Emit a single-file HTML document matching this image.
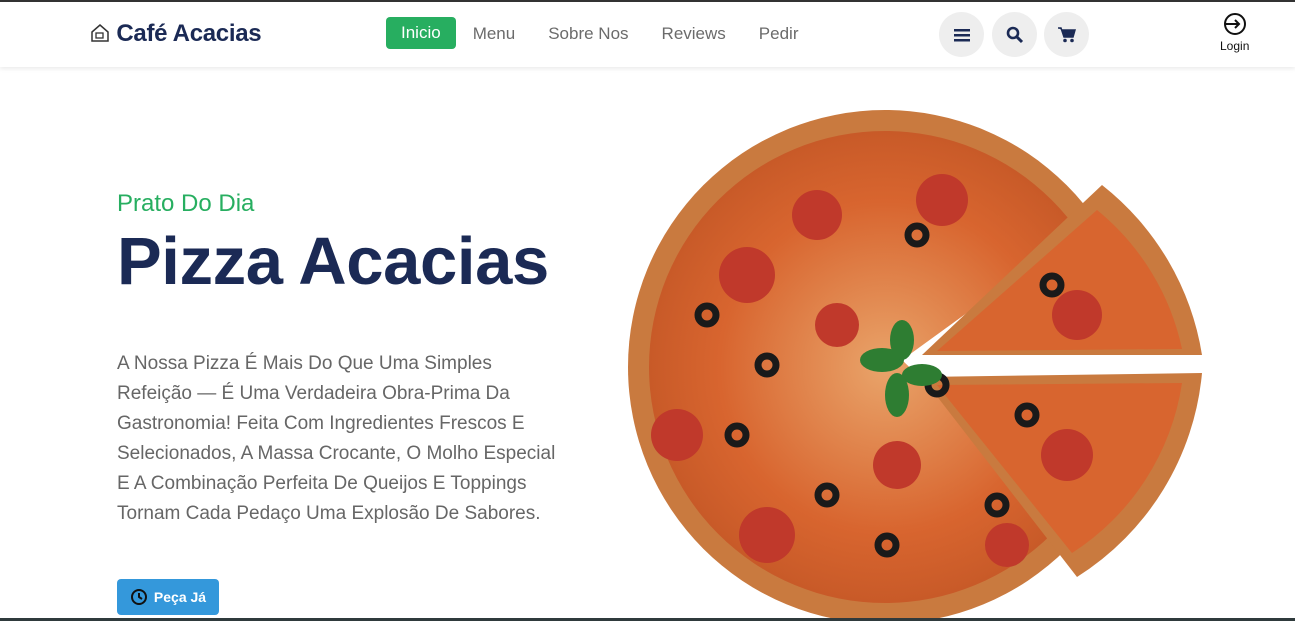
<!DOCTYPE html>
<html><head><meta charset="utf-8"><style>
*{margin:0;padding:0;box-sizing:border-box}
body{width:1295px;height:621px;overflow:hidden;background:#fff;font-family:"Liberation Sans",sans-serif;position:relative}
.top{position:absolute;top:0;left:0;right:0;height:2px;background:#333}
.nav{position:absolute;top:2px;left:0;right:0;height:65px;background:#fff;box-shadow:0 2px 4px rgba(0,0,0,.08)}
.logo{position:absolute;left:90px;top:18px;font-size:24px;font-weight:bold;color:#1b2a55;letter-spacing:-.3px}
.links{position:absolute;left:386px;top:15px;display:flex;align-items:center}
.links a{font-size:17px;color:#6b6b6b;text-decoration:none;margin-right:33px;position:relative;top:1px}
.links a.act{background:#27ae60;color:#fff;padding:6px 15px;border-radius:4px;margin-right:17px;top:0}
.ic{position:absolute;top:10px;width:45px;height:45px;border-radius:50%;background:#eee;display:flex;align-items:center;justify-content:center}
.login{position:absolute;left:1220px;top:10px;text-align:center;font-size:12px;color:#111}
.h5{position:absolute;left:117px;top:190px;color:#27ae60;font-size:24px}
h1{position:absolute;left:117px;top:223px;color:#1b2a55;font-size:67px;font-weight:bold;letter-spacing:-.4px}
p{position:absolute;left:117px;top:349px;color:#666;font-size:19px;line-height:30px;white-space:nowrap}
.btn{position:absolute;left:117px;top:579px;width:102px;height:36px;background:#3498db;border-radius:4px;color:#fff;font-weight:bold;font-size:14px;display:flex;align-items:center;justify-content:center;gap:6px}
.bot{position:absolute;left:0;right:0;bottom:0;height:3px;background:#2f3a3c}
</style></head><body>
<div class="top"></div>
<div class="nav">
<div class="logo"><svg width="20" height="20" viewBox="0 0 20 20" style="vertical-align:-2px"><path d="M2 9L10 2l8 7v9H2z" fill="none" stroke="#333" stroke-width="1.5"/><rect x="6" y="10" width="7" height="5" fill="none" stroke="#333" stroke-width="1.3"/></svg> Café Acacias</div>
<div class="links"><a class="act">Inicio</a><a>Menu</a><a>Sobre Nos</a><a>Reviews</a><a>Pedir</a></div>
<div class="ic" style="left:939px"><svg width="16" height="14"><rect y="1" width="16" height="2.5" fill="#1b2a55"/><rect y="6" width="16" height="2.5" fill="#1b2a55"/><rect y="11" width="16" height="2.5" fill="#1b2a55"/></svg></div>
<div class="ic" style="left:992px"><svg width="18" height="18"><circle cx="7" cy="7" r="5" fill="none" stroke="#1b2a55" stroke-width="2.6"/><path d="M11 11l5 5" stroke="#1b2a55" stroke-width="3"/></svg></div>
<div class="ic" style="left:1044px"><svg width="18" height="17"><path d="M0 2h3l3 9h9l2-7H4" fill="#1b2a55" stroke="#1b2a55" stroke-width="1.5"/><circle cx="7" cy="14.5" r="1.8" fill="#1b2a55"/><circle cx="14" cy="14.5" r="1.8" fill="#1b2a55"/></svg></div>
<div class="login"><svg width="24" height="24" viewBox="0 0 24 24"><circle cx="12" cy="12" r="10" fill="none" stroke="#111" stroke-width="2"/><path d="M2 12h14M12 8l4 4-4 4" fill="none" stroke="#111" stroke-width="2"/></svg><br>Login</div>
</div>
<div class="h5">Prato Do Dia</div>
<h1>Pizza Acacias</h1>
<p>A Nossa Pizza É Mais Do Que Uma Simples<br>Refeição — É Uma Verdadeira Obra-Prima Da<br>Gastronomia! Feita Com Ingredientes Frescos E<br>Selecionados, A Massa Crocante, O Molho Especial<br>E A Combinação Perfeita De Queijos E Toppings<br>Tornam Cada Pedaço Uma Explosão De Sabores.</p>
<div class="btn"><svg width="18" height="18" viewBox="0 0 18 18"><circle cx="9" cy="9" r="7" fill="none" stroke="#111" stroke-width="2"/><path d="M9 5v4l3 2" fill="none" stroke="#111" stroke-width="2"/></svg>Peça Já</div>
<svg style="position:absolute;left:597px;top:105px" width="620" height="516" viewBox="0 0 620 516">
<defs><radialGradient id="g"><stop offset="0" stop-color="#e9a46a"/><stop offset=".7" stop-color="#d8652f"/><stop offset="1" stop-color="#c85a28"/></radialGradient></defs>
<circle cx="288" cy="262" r="257" fill="#c97a3f"/>
<circle cx="288" cy="262" r="236" fill="url(#g)"/>
<path d="M305 255 L560 70 L620 70 L620 480 L540 480 Z" fill="#fff"/>
<path d="M325 250 L505 80 A270 270 0 0 1 605 250 Z" fill="#c97a3f"/>
<path d="M340 246 L500 105 A245 245 0 0 1 585 244 Z" fill="#d8652f"/>
<path d="M325 272 L605 268 A270 270 0 0 1 480 472 Z" fill="#c97a3f"/>
<path d="M340 280 L585 278 A245 245 0 0 1 475 448 Z" fill="#d8652f"/>
<g fill="#c0392b"><circle cx="150" cy="170" r="28"/><circle cx="220" cy="110" r="25"/><circle cx="345" cy="95" r="26"/><circle cx="480" cy="210" r="25"/><circle cx="80" cy="330" r="26"/><circle cx="170" cy="430" r="28"/><circle cx="300" cy="360" r="24"/><circle cx="470" cy="350" r="26"/><circle cx="410" cy="440" r="22"/><circle cx="240" cy="220" r="22"/></g>
<g fill="none" stroke="#1a1a1a" stroke-width="7"><circle cx="110" cy="210" r="9"/><circle cx="170" cy="260" r="9"/><circle cx="320" cy="130" r="9"/><circle cx="455" cy="180" r="9"/><circle cx="340" cy="280" r="9"/><circle cx="230" cy="390" r="9"/><circle cx="290" cy="440" r="9"/><circle cx="430" cy="310" r="9"/><circle cx="140" cy="330" r="9"/><circle cx="400" cy="400" r="9"/></g>
<g fill="#2e7d32"><ellipse cx="285" cy="255" rx="22" ry="12"/><ellipse cx="305" cy="235" rx="12" ry="20"/><ellipse cx="325" cy="270" rx="20" ry="11"/><ellipse cx="300" cy="290" rx="12" ry="22"/></g>
</svg>
<div class="bot"></div>
</body></html>
